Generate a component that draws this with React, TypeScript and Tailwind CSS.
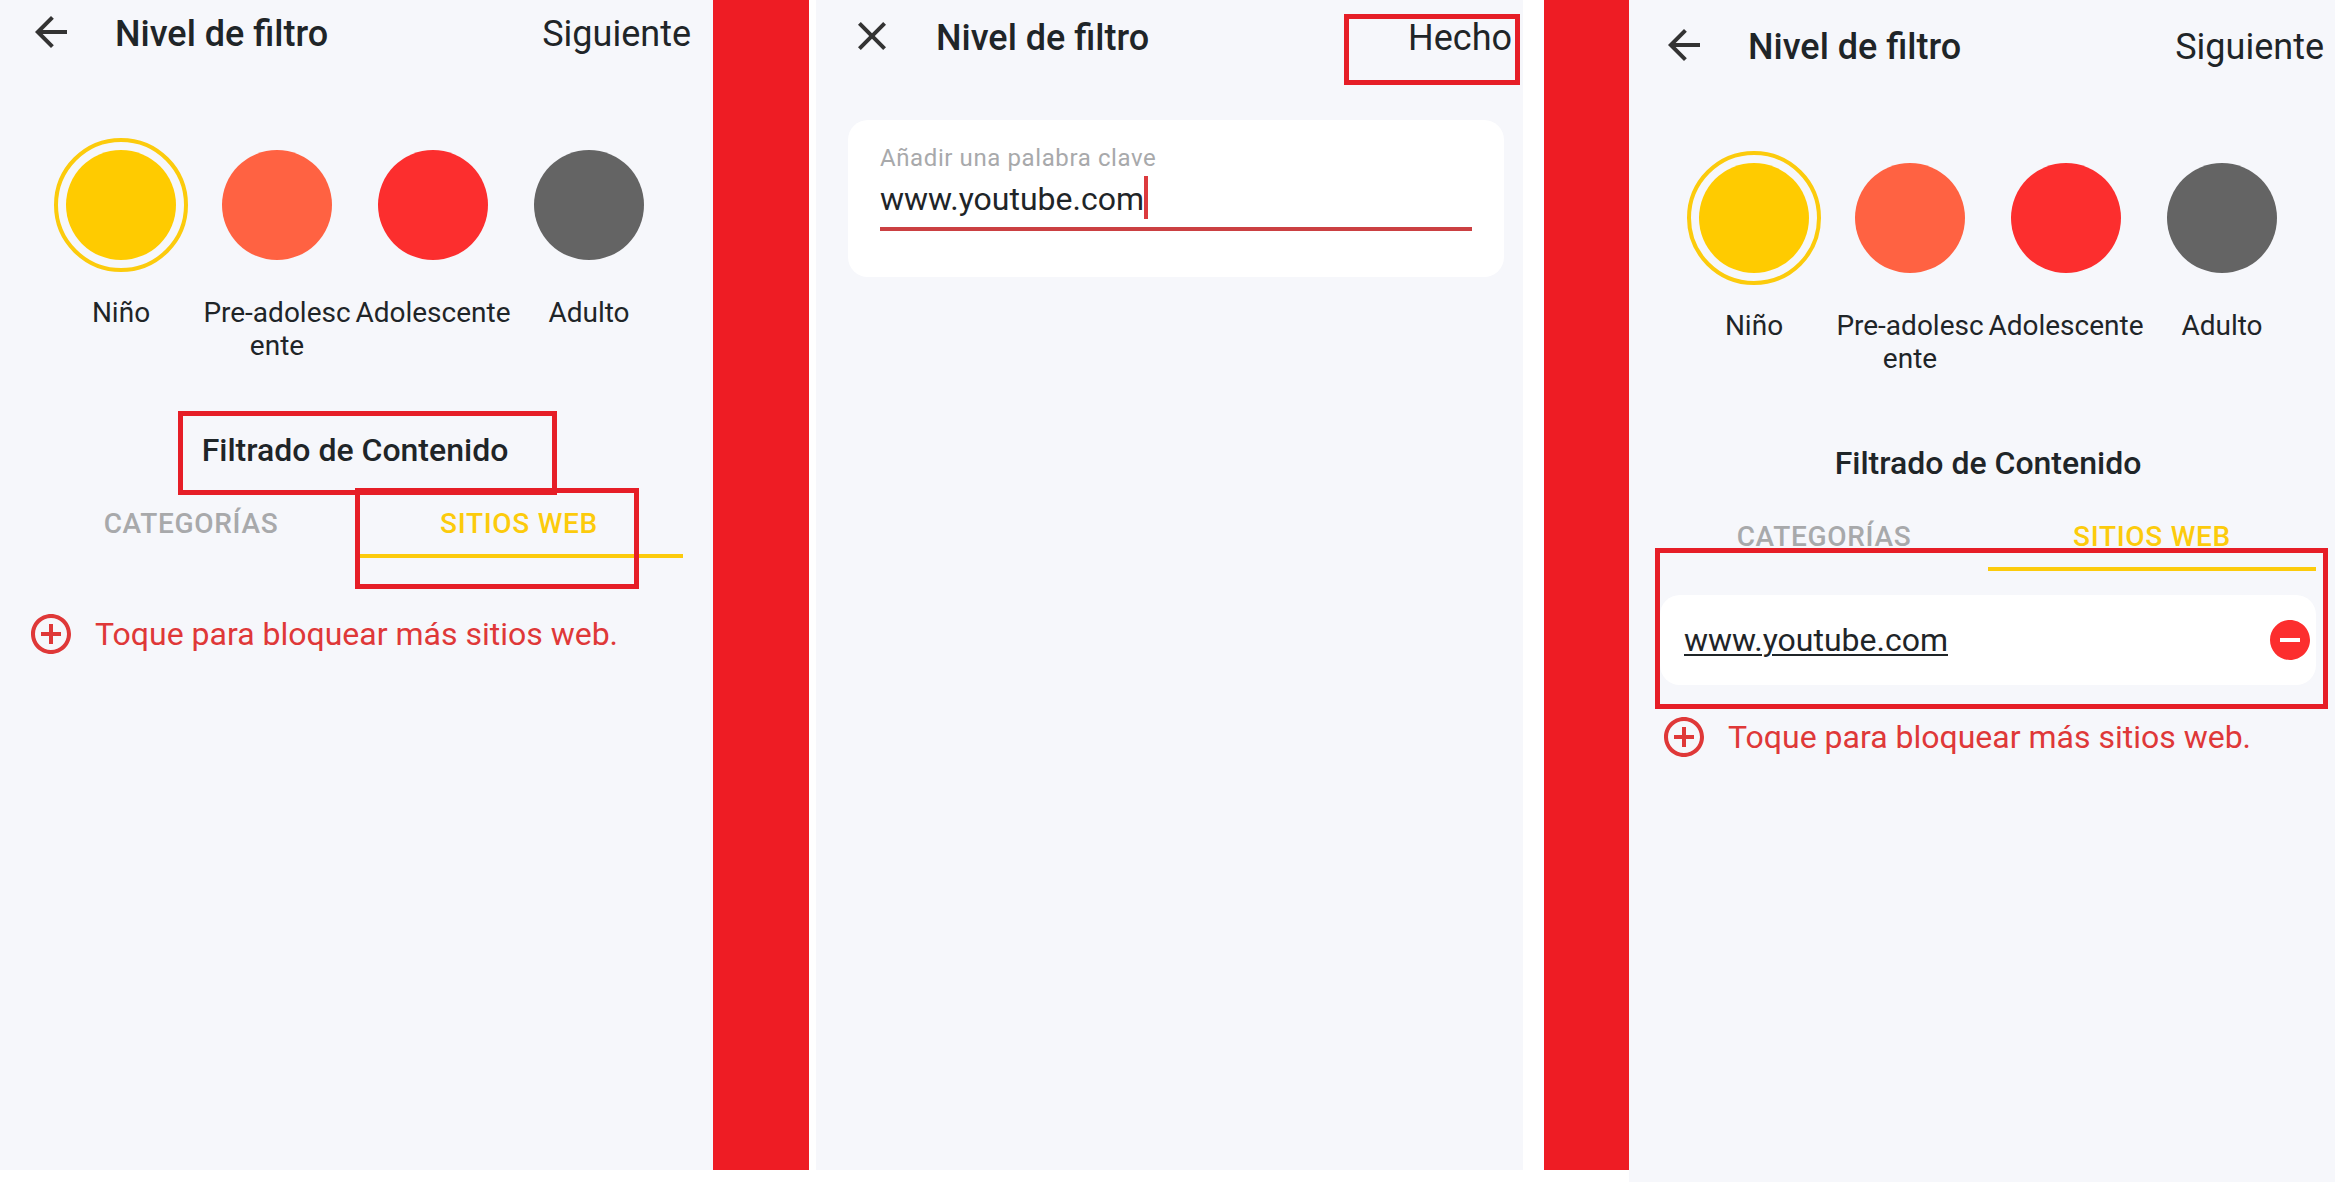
import { useId, type ReactNode } from 'react';
import clsx from 'clsx';

const levels = [
  { name: 'Niño', color: 'bg-[#ffcb00]' },
  { name: 'Pre-adolescente', color: 'bg-[#ff6242]' },
  { name: 'Adolescente', color: 'bg-[#fc2e2e]' },
  { name: 'Adulto', color: 'bg-[#646464]' },
];

function BackIcon() {
  return (
    <svg viewBox="0 0 24 24" className="size-12 fill-[#333333]" aria-hidden="true">
      <path d="M20 11H7.83l5.59-5.59L12 4l-8 8 8 8 1.41-1.41L7.83 13H20v-2z" />
    </svg>
  );
}

function CloseIcon() {
  return (
    <svg viewBox="0 0 24 24" className="size-12 fill-[#333333]" aria-hidden="true">
      <path d="M19 6.41L17.59 5 12 10.59 6.41 5 5 6.41 10.59 12 5 17.59 6.41 19 12 13.41 17.59 19 19 17.59 13.41 12z" />
    </svg>
  );
}

function AddIcon() {
  return (
    <svg viewBox="0 0 24 24" className="size-12 fill-[#df3838]" aria-hidden="true">
      <path d="M13 7h-2v4H7v2h4v4h2v-4h4v-2h-4V7zm-1-5C6.48 2 2 6.48 2 12s4.48 10 10 10 10-4.48 10-10S17.52 2 12 2zm0 18c-4.41 0-8-3.59-8-8s3.59-8 8-8 8 3.59 8 8-3.59 8-8 8z" />
    </svg>
  );
}

function RemoveIcon() {
  return (
    <svg viewBox="0 0 24 24" className="size-12 fill-[#fc2e2e]" aria-hidden="true">
      <path d="M12 2C6.48 2 2 6.48 2 12s4.48 10 10 10 10-4.48 10-10S17.52 2 12 2zm5 11H7v-2h10v2z" />
    </svg>
  );
}

// Red tutorial frame laid over the part being explained
function Highlight({ className }: { className: string }) {
  return (
    <div
      className={clsx('pointer-events-none absolute z-10 border-[5px] border-[#e61e27]', className)}
    />
  );
}

function Divider() {
  return <div className="mb-3 bg-[#ee1c24]" />;
}

interface TopBarProps {
  icon: ReactNode;
  iconLabel: string;
  action: string;
  children?: ReactNode;
}

function TopBar({ icon, iconLabel, action, children }: TopBarProps) {
  return (
    <header className="relative -mr-2 flex h-16 items-center">
      <button type="button" aria-label={iconLabel}>
        {icon}
      </button>
      <h1 className="ml-10 flex-1 pt-1 text-[36px] leading-10 font-medium">Nivel de filtro</h1>
      <button type="button" className="pt-1 text-[36px] leading-10">
        {action}
      </button>
      {children}
    </header>
  );
}

function LevelPicker() {
  const group = useId();

  return (
    <div role="radiogroup" aria-label="Nivel de filtro" className="mt-[74px] grid grid-cols-4 px-4">
      {levels.map(({ name, color }, i) => (
        <label key={name} className="flex flex-col items-center gap-6">
          <span
            className={clsx(
              'flex rounded-full border-4 p-2',
              i === 0 ? 'border-[#fccb0c]' : 'border-transparent'
            )}
          >
            <input
              type="radio"
              name={group}
              defaultChecked={i === 0}
              className={clsx('size-[110px] appearance-none rounded-full', color)}
            />
          </span>
          <span className="min-h-[66px] text-center text-[28px] leading-[33px] break-all">
            {name}
          </span>
        </label>
      ))}
    </div>
  );
}

function FilterTabs() {
  return (
    <div role="tablist" className="grid grid-cols-2 text-[28px] leading-[33px] font-medium">
      <button
        type="button"
        role="tab"
        aria-selected="false"
        className="border-b-4 border-transparent pt-[22px] pb-[14px] tracking-wide text-[#a8a9ab]"
      >
        CATEGORÍAS
      </button>
      <button
        type="button"
        role="tab"
        aria-selected="true"
        className="border-b-4 border-[#fccb0c] pt-[22px] pb-[14px] tracking-wide text-[#fccb0c]"
      >
        SITIOS WEB
      </button>
    </div>
  );
}

interface FilterScreenProps {
  className: string;
  sites: string[];
  headingMark?: ReactNode;
  tabsMark?: ReactNode;
}

function FilterScreen({ className, sites, headingMark, tabsMark }: FilterScreenProps) {
  return (
    <section className={clsx('bg-[#f6f7fb]', className)}>
      <TopBar icon={<BackIcon />} iconLabel="Atrás" action="Siguiente" />
      <LevelPicker />
      <div className="relative mt-[69px]">
        <h2 className="text-center text-[32px] leading-[38px] font-medium">
          Filtrado de Contenido
        </h2>
        {headingMark}
      </div>
      <div className="relative pt-4">
        <FilterTabs />
        <ul className="pt-6">
          {sites.map((site) => (
            <li
              key={site}
              className="flex h-[90px] items-center justify-between rounded-[20px] bg-white pr-[2px] pl-6"
            >
              <a
                href={`https://${site}`}
                className="text-[32px] leading-[38px] underline decoration-2 underline-offset-[3px]"
              >
                {site}
              </a>
              <button type="button" aria-label={`Quitar ${site}`}>
                <RemoveIcon />
              </button>
            </li>
          ))}
        </ul>
        {tabsMark}
      </div>
      <button type="button" className="mt-7 flex items-center gap-5 text-[#df3838]">
        <AddIcon />
        <span className="text-[32px] leading-[38px]">Toque para bloquear más sitios web.</span>
      </button>
    </section>
  );
}

function KeywordScreen() {
  return (
    <section className="mb-3 bg-[#f6f7fb] pt-1 pr-[19px] pl-8">
      <TopBar icon={<CloseIcon />} iconLabel="Cerrar" action="Hecho">
        <Highlight className="top-[10px] -right-2 h-[71px] w-[176px]" />
      </TopBar>
      <div className="mt-[52px] rounded-[20px] bg-white px-8 pt-6 pb-[46px]">
        <label htmlFor="keyword" className="block text-[24px] leading-7 tracking-wide text-[#a8a9ab]">
          Añadir una palabra clave
        </label>
        <div className="mt-1 flex h-[55px] items-start border-b-4 border-[#cb4042]">
          <input
            id="keyword"
            type="text"
            defaultValue="www.youtube.com"
            className="field-sizing-content h-[43px] pt-[2px] text-[32px] leading-10 outline-none"
          />
          <span className="h-[43px] w-1 bg-[#dc3a3e]" />
        </div>
      </div>
    </section>
  );
}

export default function App() {
  return (
    <main className="grid min-h-screen grid-cols-[713fr_96fr_7fr_707fr_21fr_85fr_706fr] bg-white font-['Roboto',sans-serif] text-[#1f2528]">
      <FilterScreen
        className="mb-3 pr-[30px] pl-[27px]"
        sites={[]}
        headingMark={<Highlight className="-top-5 left-[151px] h-[84px] w-[379px]" />}
        tabsMark={<Highlight className="top-[19px] left-1/2 h-[101px] w-[284px]" />}
      />
      <Divider />
      <div />
      <KeywordScreen />
      <div />
      <Divider />
      <FilterScreen
        className="pt-[13px] pr-[19px] pl-[31px]"
        sites={['www.youtube.com']}
        tabsMark={<Highlight className="top-[66px] -right-3 -bottom-6 -left-[5px]" />}
      />
    </main>
  );
}
